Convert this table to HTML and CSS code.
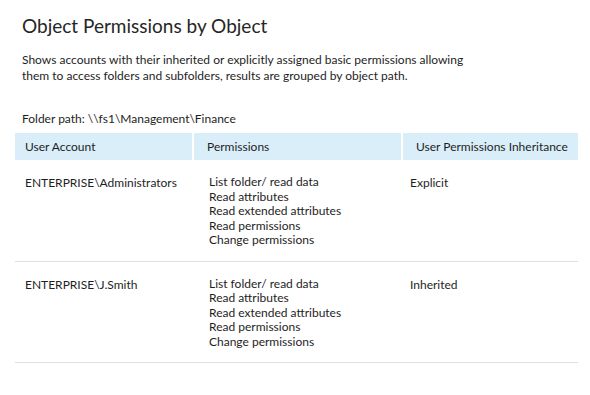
FILE: index.html
```html
<!DOCTYPE html>
<html>
<head>
<meta charset="utf-8">
<link rel="stylesheet" href="styles.css">
</head>
<body>
<div class="report">
  <h1 class="title">Object Permissions by Object</h1>
  <p class="desc">Shows accounts with their inherited or explicitly assigned basic permissions allowing<br>them to access folders and subfolders, results are grouped by object path.</p>
  <p class="path">Folder path: \\fs1\Management\Finance</p>
  <div class="table">
    <div class="head">
      <div class="th c1">User Account</div>
      <div class="th c2">Permissions</div>
      <div class="th c3">User Permissions Inheritance</div>
    </div>
    <div class="row">
      <div class="td c1">ENTERPRISE\Administrators</div>
      <div class="td c2 perms">List folder/ read data<br>Read attributes<br>Read extended attributes<br>Read permissions<br>Change permissions</div>
      <div class="td c3">Explicit</div>
    </div>
    <div class="row">
      <div class="td c1">ENTERPRISE\J.Smith</div>
      <div class="td c2 perms">List folder/ read data<br>Read attributes<br>Read extended attributes<br>Read permissions<br>Change permissions</div>
      <div class="td c3">Inherited</div>
    </div>
  </div>
</div>
</body>
</html>
```
FILE: styles.css
```css
html, body { margin: 0; padding: 0; background: #fff; }
body { font-family: "Segoe UI", Lato, "Open Sans", sans-serif; color: #1e1e1e; }
.report { padding: 13px 12px 0 15px; }
.title { margin: 0 0 0 7px; font-size: 19px; font-weight: 400; line-height: 26px; color: #262626; }
.desc { margin: 13px 0 0 7px; font-size: 12px; line-height: 16px; }
.path { margin: 27px 0 0 7px; font-size: 12px; line-height: 16px; }
.table { margin-top: 6px; width: 563px; }
.head { display: grid; grid-template-columns: 177px 207px 175px; column-gap: 2px; height: 27px; }
.th { background: #d9eef9; font-size: 12px; line-height: 27px; }
.th.c1 { padding-left: 10px; }
.th.c2 { padding-left: 13px; }
.th.c3 { padding-left: 13px; }
.row { display: grid; grid-template-columns: 177px 207px 175px; column-gap: 2px; border-bottom: 1px solid #e0e0e0; padding: 15px 0 13px; }
.td { font-size: 12px; line-height: 16px; }
.td.c1 { padding-left: 10px; }
.td.c2 { padding-left: 15px; }
.td.c3 { padding-left: 7px; }
.perms { line-height: 14.5px; }
```
